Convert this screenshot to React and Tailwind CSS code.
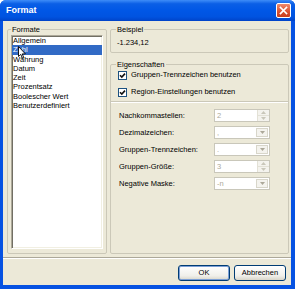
import React from "react";

const formats = ["Allgemein", "Zahl", "Währung", "Datum", "Zeit", "Prozentsatz", "Boolescher Wert", "Benutzerdefiniert"];

const fields = [
    { label: "Nachkommastellen:", value: "2", kind: "spin" },
    { label: "Dezimalzeichen:", value: ",", kind: "combo" },
    { label: "Gruppen-Trennzeichen:", value: ".", kind: "combo" },
    { label: "Gruppen-Größe:", value: "3", kind: "spin" },
    { label: "Negative Maske:", value: "-n", kind: "combo" },
];

function Arrow({ down, color }) {
    return (
        <svg width="5" height="3" viewBox="0 0 5 3">
            <path d={down ? "M0 0h5L2.5 3z" : "M0 3h5L2.5 0z"} fill={color} />
        </svg>
    );
}

function Field({ value, kind }) {
    return (
        <div className="w-[56px] h-[13px] border border-[#C9C7BA] bg-white flex">
            <span className="flex-1 pl-[2px] leading-[11px] text-[#ACA899]">{value}</span>
            {kind === "spin" ? (
                <div className="w-[12px] flex flex-col border-l border-[#E3E1D6]">
                    <div className="flex-1 flex items-center justify-center bg-[#F4F3EE] border-b border-[#E3E1D6]">
                        <Arrow color="#C9C7BA" />
                    </div>
                    <div className="flex-1 flex items-center justify-center bg-[#F4F3EE]">
                        <Arrow down color="#C9C7BA" />
                    </div>
                </div>
            ) : (
                <div className="w-[12px] m-[1px] flex items-center justify-center bg-[#F4F3EE] border border-[#D8D6CA]">
                    <Arrow down color="#ACA899" />
                </div>
            )}
        </div>
    );
}

function CheckRow({ label }) {
    return (
        <div className="h-[12px] flex items-center pl-[7px]">
            <div className="w-[9px] h-[9px] border border-[#1C5180] bg-white flex items-center justify-center">
                <svg width="7" height="7" viewBox="0 0 7 7">
                    <path d="M1 3.2l1.8 1.8L6 1.6" stroke="#111" strokeWidth="1.6" fill="none" />
                </svg>
            </div>
            <span className="ml-[4px]">{label}</span>
        </div>
    );
}

export default function App() {
    return (
        <div className="relative w-[295px] h-[289px] flex flex-col bg-[#0652E2] rounded-t-[6px] overflow-hidden font-['Liberation_Sans',Arial,sans-serif] text-[7.5px] text-black">
            {/* Titelleiste */}
            <div className="h-[21px] shrink-0 flex items-center bg-[linear-gradient(to_bottom,#3E8DF8_0%,#0B5FE6_18%,#0057E6_50%,#0053E0_80%,#0043C8_100%)]">
                <span className="ml-[6px] text-[9px] font-bold text-white leading-none">Format</span>
                <div className="ml-auto mr-[4px] w-[15px] h-[15px] rounded-[2px] border border-white bg-[linear-gradient(to_bottom,#EE8A6E,#D9502F_60%,#C63D1C)] flex items-center justify-center">
                    <svg width="9" height="9" viewBox="0 0 9 9">
                        <path d="M1.5 1.5l6 6M7.5 1.5l-6 6" stroke="#fff" strokeWidth="1.7" strokeLinecap="square" />
                    </svg>
                </div>
            </div>

            {/* Inhalt */}
            <div className="flex-1 ml-[3px] mr-[4px] mb-[4px] bg-[#ECE9D8] flex flex-col">
                <div className="flex pt-[4px] pl-[4px] pr-[2px] gap-[3px]">
                    {/* Formate */}
                    <fieldset className="w-[100px] h-[229px] border border-[#CBC8B8] rounded-[2px] px-[3px] pb-[4px]">
                        <legend className="ml-0 px-[1px] leading-[9px]">Formate</legend>
                        <div className="mt-[1px] h-[214px] bg-white border border-t-[#ACA899] border-l-[#ACA899] border-b-white border-r-white shadow-[inset_1px_1px_0_#716F64,inset_-1px_-1px_0_#F1EFE2]">
                            {formats.map((f) => (
                                <div
                                    key={f}
                                    className={`leading-[9.3px] pl-[1px] ${f === "Zahl" ? "bg-[#316AC5] text-white" : ""}`}
                                >
                                    {f}
                                </div>
                            ))}
                        </div>
                    </fieldset>

                    <div className="w-[179px] flex flex-col">
                        {/* Beispiel */}
                        <fieldset className="h-[28px] border border-[#CBC8B8] rounded-[2px]">
                            <legend className="ml-[5px] px-[1px] leading-[9px]">Beispiel</legend>
                            <div className="mt-[4px] pl-[6px] leading-[9px]">-1.234,12</div>
                        </fieldset>

                        {/* Eigenschaften */}
                        <fieldset className="mt-[7px] h-[194px] border border-[#CBC8B8] rounded-[2px]">
                            <legend className="ml-[5px] px-[1px] leading-[9px]">Eigenschaften</legend>
                            <CheckRow label="Gruppen-Trennzeichen benutzen" />
                            <div className="mt-[5px]">
                                <CheckRow label="Region-Einstellungen benutzen" />
                            </div>
                            <div className="mt-[3px] border-t border-[#CBC8B8] border-b border-b-white" />
                            <div className="mt-[6px] flex flex-col gap-[4px] pl-[8px]">
                                {fields.map((r) => (
                                    <div key={r.label} className="h-[13px] flex items-center">
                                        <span className="w-[95px]">{r.label}</span>
                                        <Field value={r.value} kind={r.kind} />
                                    </div>
                                ))}
                            </div>
                        </fieldset>
                    </div>
                </div>

                <div className="mt-[3px] border-t border-[#ACA899] border-b border-b-white" />

                {/* Schaltflächen */}
                <div className="mt-[6px] flex justify-end gap-[4px] pr-[5px]">
                    <button className="w-[52px] h-[16px] rounded-[3px] border border-[#003C74] bg-[linear-gradient(to_bottom,#FFFFFF,#F0EFEA_70%,#D8D5C9)] shadow-[inset_0_0_0_1px_#7C9FD6] leading-none">
                        OK
                    </button>
                    <button className="w-[52px] h-[16px] rounded-[3px] border border-[#003C74] bg-[linear-gradient(to_bottom,#FFFFFF,#F0EFEA_70%,#D8D5C9)] leading-none">
                        Abbrechen
                    </button>
                </div>
            </div>

            {/* Mauszeiger */}
            <svg className="absolute left-[18px] top-[46px]" width="8" height="13" viewBox="0 0 8 13">
                <path d="M0.5 0.5v10l2.3-2.1 1.6 3.8 1.4-0.6-1.6-3.7h3.2z" fill="#fff" stroke="#000" strokeWidth="0.9" />
            </svg>
        </div>
    );
}
